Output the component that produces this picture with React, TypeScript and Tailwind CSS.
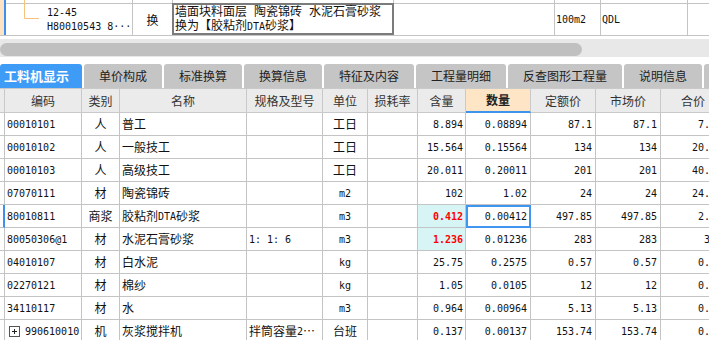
import React from "react";

const cjk = "font-['Noto_Sans_CJK_SC',sans-serif]";
const mono = "font-['DejaVu_Sans_Mono','Liberation_Mono',monospace] text-[10px]";
const cols = "grid grid-cols-[5px_77px_38px_127px_76px_45px_50px_48px_65px_65px_65px_65px] w-[726px]";

function M({ children, className = "" }: { children: React.ReactNode; className?: string }) {
  return <span className={mono + " " + className}>{children}</span>;
}

// half-width gap like the old bitmap font's space
const Sp = () => <span className="inline-block w-[7px]" />;

type Row = {
  code: string;
  kind: string;
  name: React.ReactNode;
  spec?: React.ReactNode;
  unit: React.ReactNode;
  qty: string;
  amount: string;
  price: string;
  market: string;
  total: string;
  hl?: boolean;
  sel?: boolean;
  expand?: boolean;
};

const rows: Row[] = [
  { code: "00010101", kind: "人", name: "普工", unit: "工日", qty: "8.894", amount: "0.08894", price: "87.1", market: "87.1", total: "7.75" },
  { code: "00010102", kind: "人", name: "一般技工", unit: "工日", qty: "15.564", amount: "0.15564", price: "134", market: "134", total: "20.86" },
  { code: "00010103", kind: "人", name: "高级技工", unit: "工日", qty: "20.011", amount: "0.20011", price: "201", market: "201", total: "40.22" },
  { code: "07070111", kind: "材", name: "陶瓷锦砖", unit: <M>m2</M>, qty: "102", amount: "1.02", price: "24", market: "24", total: "24.48" },
  {
    code: "80010811",
    kind: "商浆",
    name: (
      <>
        胶粘剂<M>DTA</M>砂浆
      </>
    ),
    unit: <M>m3</M>,
    qty: "0.412",
    amount: "0.00412",
    price: "497.85",
    market: "497.85",
    total: "2.05",
    hl: true,
    sel: true,
  },
  { code: "80050306@1", kind: "材", name: "水泥石膏砂浆", spec: <M>1: 1: 6</M>, unit: <M>m3</M>, qty: "1.236", amount: "0.01236", price: "283", market: "283", total: "3.5", hl: true },
  { code: "04010107", kind: "材", name: "白水泥", unit: <M>kg</M>, qty: "25.75", amount: "0.2575", price: "0.57", market: "0.57", total: "0.15" },
  { code: "02270121", kind: "材", name: "棉纱", unit: <M>kg</M>, qty: "1.05", amount: "0.0105", price: "12", market: "12", total: "0.13" },
  { code: "34110117", kind: "材", name: "水", unit: <M>m3</M>, qty: "0.964", amount: "0.00964", price: "5.13", market: "5.13", total: "0.05" },
  {
    code: "990610010",
    kind: "机",
    name: "灰浆搅拌机",
    spec: (
      <>
        拌筒容量<M>2</M>⋯
      </>
    ),
    unit: "台班",
    qty: "0.137",
    amount: "0.00137",
    price: "153.74",
    market: "153.74",
    total: "0.21",
    expand: true,
  },
];

function TopRow() {
  return (
    <div className="relative flex h-[36px] border-b border-[#c4c4c4]">
      <div className="w-[4px] bg-[#fde3c3]" />
      <div className="w-[2px] bg-[#3f90ea]" />
      <div className="flex flex-1 flex-col">
        <div className="flex h-[3px]">
          <div className="w-[127px] border-r border-[#c4c4c4]" />
          <div className="w-[40px] border-r border-[#c4c4c4]" />
          <div className="w-[221px] border-r border-[#c4c4c4]" />
          <div className="w-[161px] border-r border-[#c4c4c4]" />
          <div className="w-[46px] border-r border-[#c4c4c4]" />
          <div className="w-[87px] border-r border-[#c4c4c4]" />
          <div className="flex-1" />
        </div>
        <div className="flex h-[32px] text-[12px]">
          <div className="flex w-[127px] flex-col justify-center border-t border-r border-[#c4c4c4] pl-[41px] leading-[14px]">
            <M>12-45</M>
            <M>H80010543 8···</M>
          </div>
          <div className="flex w-[39px] items-center justify-center border-t border-[#c4c4c4]">换</div>
          <div className="flex w-[222px] flex-col justify-center border-2 border-[#7b7b7b] pl-[1px] leading-[14px] whitespace-nowrap">
            <span>
              墙面块料面层<Sp />陶瓷锦砖<Sp />水泥石膏砂浆
            </span>
            <span>
              换为【胶粘剂<M>DTA</M>砂浆】
            </span>
          </div>
          <div className="w-[161px] border-t border-r border-[#c4c4c4]" />
          <div className="flex w-[46px] items-center border-t border-r border-[#c4c4c4] pl-[1px]">
            <M>100m2</M>
          </div>
          <div className="flex w-[87px] items-center border-t border-r border-[#c4c4c4] pl-[1px]">
            <M>QDL</M>
          </div>
          <div className="flex-1 border-t border-[#c4c4c4]" />
        </div>
      </div>
      <svg className="pointer-events-none absolute top-0 left-0" width="40" height="36">
        <path d="M24.5 0 V18.5 H39" fill="none" stroke="#f7c27c" strokeWidth="1" />
      </svg>
    </div>
  );
}

function ScrollBar() {
  return (
    <div className="h-[28px] pt-[3px]">
      <div className="h-[18px] bg-[#e8e8e8] pt-[4px]">
        <div className="h-[13px] w-[582px] rounded-[7px] bg-[#c0c0c0]" />
      </div>
    </div>
  );
}

const tabs: [string, string][] = [
  ["工料机显示", "w-[82px]"],
  ["单价构成", "w-[78px]"],
  ["标准换算", "w-[78px]"],
  ["换算信息", "w-[78px]"],
  ["特征及内容", "w-[90px]"],
  ["工程量明细", "w-[90px]"],
  ["反查图形工程量", "w-[114px]"],
  ["说明信息", "w-[78px]"],
  ["", "w-[80px]"],
];

function Tabs() {
  return (
    <div className="flex h-[24px] gap-[2px]">
      {tabs.map(([label, w], i) =>
        i === 0 ? (
          <div key={i} className={w + " flex shrink-0 items-center rounded-t-[3px] bg-[#3f9cf6] pl-[4px] text-[13px] font-bold text-white"}>
            {label}
          </div>
        ) : (
          <div key={i} className={w + " flex shrink-0 items-center justify-center rounded-t-[3px] bg-[#c5c5c5] text-[12px] text-[#222]"}>
            {label}
          </div>
        )
      )}
    </div>
  );
}

const heads = ["", "编码", "类别", "名称", "规格及型号", "单位", "损耗率", "含量", "数量", "定额价", "市场价", "合价"];

function Grid() {
  const cell = "h-[23px] border-r border-b border-[#c4c4c4] flex items-center overflow-hidden whitespace-nowrap text-[12px] text-[#111]";
  return (
    <div className={cols}>
      {heads.map((h, i) =>
        h === "数量" ? (
          <div key={i} className="flex h-[25px] items-center justify-center border-t border-r border-b-2 border-[#c9c9c9] border-b-[#3d94ec] bg-[#fde5c5] text-[12px] font-bold text-[#222]">
            {h}
          </div>
        ) : (
          <div key={i} className="flex h-[25px] items-center justify-center border-t border-r border-b border-[#c9c9c9] bg-[#ebebeb] text-[12px] text-[#333]">
            {h}
          </div>
        )
      )}
      {rows.map((r, i) => (
        <React.Fragment key={i}>
          <div className={cell + (r.sel ? " border-r-2 border-r-[#3f90ea]" : "")} />
          <div className={cell + (r.expand ? " pl-[4px]" : " pl-[2px]")}>
            {r.expand && (
              <svg className="mr-[5px] shrink-0" width="11" height="11">
                <rect x="0.5" y="0.5" width="10" height="10" fill="white" stroke="#555" />
                <path d="M3 5.5 H8 M5.5 3 V8" stroke="#222" />
              </svg>
            )}
            <M>{r.code}</M>
          </div>
          <div className={cell + " justify-center"}>{r.kind}</div>
          <div className={cell + " pl-[2px]"}>{r.name}</div>
          <div className={cell + " pl-[2px]"}>{r.spec}</div>
          <div className={cell + " justify-center"}>{r.unit}</div>
          <div className={cell} />
          <div className={cell + " justify-end pr-[2px]" + (r.hl ? " bg-[#d8f5f6]" : "")}>
            <M className={r.hl ? "font-bold text-[#ff0000]" : ""}>{r.qty}</M>
          </div>
          <div className={cell + " justify-end pr-[3px]" + (r.sel ? " outline-2 -outline-offset-2 outline-[#4096ee]" : "")}>
            <M>{r.amount}</M>
          </div>
          <div className={cell + " justify-end pr-[3px]"}>
            <M>{r.price}</M>
          </div>
          <div className={cell + " justify-end pr-[3px]"}>
            <M>{r.market}</M>
          </div>
          <div className={cell + " justify-end pr-[3px]"}>
            <M>{r.total}</M>
          </div>
        </React.Fragment>
      ))}
    </div>
  );
}

export default function App() {
  return (
    <div className={"h-[340px] w-[709px] overflow-hidden bg-white text-[#111] " + cjk}>
      <TopRow />
      <ScrollBar />
      <Tabs />
      <Grid />
    </div>
  );
}
